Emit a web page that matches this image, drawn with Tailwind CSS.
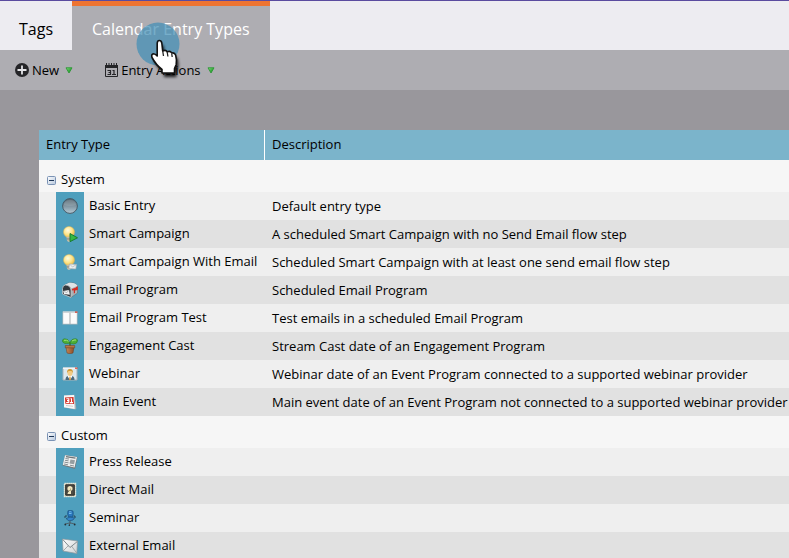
<!DOCTYPE html>
<html lang="en">
<head>
<meta charset="utf-8">
<meta name="viewport" content="width=device-width, initial-scale=1">
<title>Calendar Entry Types</title>
<script src="https://cdn.jsdelivr.net/npm/@tailwindcss/browser@4"></script>
</head>
<body class="relative min-h-screen overflow-hidden bg-[#99979c] font-['Open_Sans','Noto_Sans',sans-serif] text-[13px] leading-5 text-black">
<svg class="absolute h-0 w-0" aria-hidden="true">
  <defs>
    <linearGradient id="tri" x1="0" y1="0" x2="1" y2="1"><stop offset="0" stop-color="#8be082"/><stop offset=".6" stop-color="#2fa836"/><stop offset="1" stop-color="#16841f"/></linearGradient>
    <linearGradient id="ball" x1="0" y1="0" x2="0" y2="1"><stop offset="0" stop-color="#54656f"/><stop offset=".45" stop-color="#7b8f9b"/><stop offset="1" stop-color="#b4cad6"/></linearGradient>
    <radialGradient id="glass" cx=".4" cy=".35" r=".7"><stop offset="0" stop-color="#fffbe0"/><stop offset=".55" stop-color="#ffe58a"/><stop offset="1" stop-color="#e8b640"/></radialGradient>
    <linearGradient id="toggle" x1="0" y1="0" x2="1" y2="1"><stop offset="0" stop-color="#fff"/><stop offset="1" stop-color="#b5c6dc"/></linearGradient>
    <linearGradient id="paper" x1="0" y1="0" x2="1" y2="1"><stop offset="0" stop-color="#fff"/><stop offset="1" stop-color="#cfd2d3"/></linearGradient>
    <linearGradient id="pot" x1="0" y1="0" x2="1" y2="0"><stop offset="0" stop-color="#c98a58"/><stop offset="1" stop-color="#8a4b26"/></linearGradient>
    <g id="bulb"><circle cx="7" cy="6" r="5.500" fill="url(#glass)" stroke="#dfb85a" stroke-width=".5"/><path d="M4.500 10.800h5v1l-.5 3-1.200 1H6.200L5 14.800z" fill="#cfc8b4"/><path d="M4.700 12.300h4.600M5 13.800h4" stroke="#837d70" stroke-width=".7"/></g>
    <g id="minus"><rect x=".5" y=".5" width="8" height="8" rx="1" fill="url(#toggle)" stroke="#7b93b5"/><path d="M2 4.500h5" stroke="#1d3557"/></g>
  </defs>
</svg>

<header>
  <nav aria-label="Sections" class="flex h-[50px] border-t border-[#5a4b9f] bg-[#edecf1] text-base">
    <a href="#tags" class="flex w-[72px] items-center pt-1.5 pl-[19px]">Tags</a>
    <a href="#types" aria-current="page" class="flex items-center border-t-[5px] border-[#ee7431] bg-[#aeadb2] px-5 pt-px whitespace-nowrap text-white">Calendar Entry Types</a>
  </nav>
  <div role="toolbar" aria-label="Entry types" class="flex h-10 items-center gap-8 bg-[#aeadb2] pl-[15px]">
    <button type="button" class="flex items-center gap-[3px]">
      <svg class="size-[14px]" viewBox="0 0 14 14" aria-hidden="true"><circle cx="7" cy="7" r="7" fill="#252528"/><path d="M7 2.500v9M2.500 7h9" stroke="#e5e5e8" stroke-width="1.800"/></svg>
      <span>New</span>
      <svg class="ml-[3px] h-[7px] w-2" viewBox="0 0 8 7" aria-hidden="true"><path d="M1 .8h6L4 6z" fill="url(#tri)" stroke="#2b9634" stroke-width=".9" stroke-linejoin="round"/></svg>
    </button>
    <button type="button" class="flex items-center gap-[3px]">
      <svg class="h-[15px] w-[13px]" viewBox="0 0 13 15" aria-hidden="true"><path d="M0 2h13v3H0z" fill="#252528"/><path d="M1.500 0v3M4 0v3M6.500 0v3M9 0v3M11.500 0v3" stroke="#252528"/><path d="M.5 5v8.500h12V5" fill="none" stroke="#252528"/><path d="M2.500 7.500h3v4h-3M3.500 9.500h2M7.500 7.500H9v4M7 11.500h4" fill="none" stroke="#252528" stroke-width="1.200"/></svg>
      <span>Entry Actions</span>
      <svg class="ml-[3px] h-[7px] w-2" viewBox="0 0 8 7" aria-hidden="true"><path d="M1 .8h6L4 6z" fill="url(#tri)" stroke="#2b9634" stroke-width=".9" stroke-linejoin="round"/></svg>
    </button>
  </div>
</header>

<main class="pt-10 pl-[39px]">
  <table class="w-full table-fixed border-collapse text-left whitespace-nowrap">
    <colgroup><col class="w-[226px]"><col></colgroup>
    <thead class="bg-[#7bb4cb]">
      <tr class="h-[30px]">
        <th scope="col" class="p-0 font-normal"><div class="flex h-[30px] items-center border-r border-white pb-0.5 pl-[7px]">Entry Type</div></th>
        <th scope="col" class="p-0 pb-0.5 pl-[7px] font-normal">Description</th>
      </tr>
    </thead>
    <tbody>
      <tr class="h-8 bg-[#f6f6f6]"><th scope="rowgroup" colspan="2" class="p-0 pt-2 pl-2 font-normal"><button type="button" class="flex items-center gap-[5px]"><svg class="size-[9px]" viewBox="0 0 9 9" aria-hidden="true"><use href="#minus"/></svg><span class="pb-0.5">System</span></button></th></tr>
      <tr class="h-7 bg-[#efefef]"><td class="p-0"><div class="ml-[17px] flex items-center gap-[5px]"><span class="grid size-7 place-items-center bg-[#4f9fbd]"><svg class="size-4" viewBox="0 0 16 16" aria-hidden="true"><circle cx="8" cy="8" r="7.400" fill="url(#ball)" stroke="#465b68"/><path d="M2 7a6 5 0 0 1 12 0q-6 2-12 0z" fill="#fff" opacity=".12"/></svg></span><span class="pb-0.5">Basic Entry</span></div></td><td class="p-0 pl-[7px]">Default entry type</td></tr>
      <tr class="h-7 bg-[#e1e1e1]"><td class="p-0"><div class="ml-[17px] flex items-center gap-[5px]"><span class="grid size-7 place-items-center bg-[#4f9fbd]"><svg class="size-4" viewBox="0 0 16 16" aria-hidden="true"><use href="#bulb"/><path d="M8 7.500l7.500 4.300L8 15.700z" fill="#35b944" stroke="#14762a" stroke-width=".9"/></svg></span><span class="pb-0.5">Smart Campaign</span></div></td><td class="p-0 pl-[7px]">A scheduled Smart Campaign with no Send Email flow step</td></tr>
      <tr class="h-7 bg-[#efefef]"><td class="p-0"><div class="ml-[17px] flex items-center gap-[5px]"><span class="grid size-7 place-items-center bg-[#4f9fbd]"><svg class="size-4" viewBox="0 0 16 16" aria-hidden="true"><use href="#bulb"/><path d="M7.500 10l7 .5-.7 4.500-7-.4z" fill="#eceeee" stroke="#a5adb0" stroke-width=".6"/><path d="M7.500 10l3 3 4-2.500" fill="none" stroke="#a5adb0" stroke-width=".6"/></svg></span><span class="pb-0.5">Smart Campaign With Email</span></div></td><td class="p-0 pl-[7px]">Scheduled Smart Campaign with at least one send email flow step</td></tr>
      <tr class="h-7 bg-[#e1e1e1]"><td class="p-0"><div class="ml-[17px] flex items-center gap-[5px]"><span class="grid size-7 place-items-center bg-[#4f9fbd]"><svg class="size-4" viewBox="0 0 16 16" aria-hidden="true"><path d="M2.500 3L7 .8q6-.8 8.500 3V11L9 15.500z" fill="#a9b1b6" stroke="#5b646a" stroke-width=".5"/><path d="M2.500 3L7 .8q6-.8 8.500 3L9.500 6.500Q7 2.500 2.500 3z" fill="#dfe3e5"/><path d="M.5 6.500Q.7 3 3.700 3 8.500 3.500 9 8v7.500L.5 12z" fill="#33393e" stroke="#c6ccce" stroke-width=".8"/><path d="M1.200 9l5.800-1 .8 4.800L2 12z" fill="#f2f3f3"/><path d="M1.500 9.300l3.200 1.400L7 8.200" fill="none" stroke="#8b9499" stroke-width=".6"/><path d="M10 7l4-1.600V5l1.800-.5V8l-2.800.5V11l-1.200.5V8.200L10 8.500z" fill="#d72a20"/></svg></span><span class="pb-0.5">Email Program</span></div></td><td class="p-0 pl-[7px]">Scheduled Email Program</td></tr>
      <tr class="h-7 bg-[#efefef]"><td class="p-0"><div class="ml-[17px] flex items-center gap-[5px]"><span class="grid size-7 place-items-center bg-[#4f9fbd]"><svg class="size-4" viewBox="0 0 16 16" aria-hidden="true"><path d="M.5 1.500h15v13H.5z" fill="#b2b6b8"/><path d="M1.200 2.700h6.200v11H1.200zM8.600 2.700h6.200v11H8.600z" fill="#fbfbfb"/><path d="M1 1.500h12v1H1z" fill="#dfe3e5"/><path d="M13 1.500h2.500v1.300H13z" fill="#dd4736"/></svg></span><span class="pb-0.5">Email Program Test</span></div></td><td class="p-0 pl-[7px]">Test emails in a scheduled Email Program</td></tr>
      <tr class="h-7 bg-[#e1e1e1]"><td class="p-0"><div class="ml-[17px] flex items-center gap-[5px]"><span class="grid size-7 place-items-center bg-[#4f9fbd]"><svg class="size-4" viewBox="0 0 16 16" aria-hidden="true"><path d="M8 8.500V4" stroke="#327728" stroke-width="1.500"/><path d="M8 5Q6 0 2 .8L.2 2.300Q1 6 4.500 5.500 7 5.500 8 5z" fill="#4cae35" stroke="#25751f" stroke-width=".5"/><path d="M8 5q1-4.500 6-4.200L15.800 2q-.6 4-4 4Q9 6 8 5z" fill="#4cae35" stroke="#25751f" stroke-width=".5"/><path d="M2 2.300q3-.6 4.500 1M10 3q2-1.400 4-1" stroke="#a1e27a" fill="none"/><path d="M4 9h8l-1 6q-3 1.500-6 0z" fill="url(#pot)" stroke="#6b3b21" stroke-width=".5"/><path d="M3.300 7.500h9.400v2.300H3.300z" fill="#b97345" stroke="#6b3b21" stroke-width=".5"/></svg></span><span class="pb-0.5">Engagement Cast</span></div></td><td class="p-0 pl-[7px]">Stream Cast date of an Engagement Program</td></tr>
      <tr class="h-7 bg-[#efefef]"><td class="p-0"><div class="ml-[17px] flex items-center gap-[5px]"><span class="grid size-7 place-items-center bg-[#4f9fbd]"><svg class="size-4" viewBox="0 0 16 16" aria-hidden="true"><path d="M1 2h14v12H1z" fill="#dce8ef" stroke="#a9b1b6"/><path d="M1 1.500h14v1.300H1z" fill="#fff"/><path d="M13 1.500h2.500v1.300H13z" fill="#dd4736"/><path d="M3.500 14q0-4 3-4.300h3q3 .3 3 4.300z" fill="#4b6b81"/><path d="M6.500 9h3l.8 1.500L8 14l-2.300-3.500z" fill="#fff"/><path d="M7.600 10.500h.8l.5 3.500H7z" fill="#d5902e"/><ellipse cx="8" cy="6.800" rx="2.600" ry="3.300" fill="#f3cb85"/><path d="M5.200 7q-.5-4 2.800-4t2.800 4L9.500 5h-3z" fill="#d09a35"/></svg></span><span class="pb-0.5">Webinar</span></div></td><td class="p-0 pl-[7px]">Webinar date of an Event Program connected to a supported webinar provider</td></tr>
      <tr class="h-7 bg-[#e1e1e1]"><td class="p-0"><div class="ml-[17px] flex items-center gap-[5px]"><span class="grid size-7 place-items-center bg-[#4f9fbd]"><svg class="size-4" viewBox="0 0 16 16" aria-hidden="true"><path d="M2 1.500L12.500.8l1.800 13.700-1 1L2 13.500z" fill="#a9b3b8"/><path d="M2 1.500l10-.6.700 14L2 13.300z" fill="#f8f8f8"/><path d="M3 3.500l8.500-.5.5 7-8.700-.3z" fill="#d53227"/><path d="M4.300 4.700h2.500v3.800H4.200M5 6.600h1.800M8.500 4.700h1v4M8 8.600h3" fill="none" stroke="#fff" stroke-width="1.100"/><path d="M4 11.500l7 .8" stroke="#cbd0d2"/></svg></span><span class="pb-0.5">Main Event</span></div></td><td class="p-0 pl-[7px]">Main event date of an Event Program not connected to a supported webinar provider</td></tr>
    </tbody>
    <tbody>
      <tr class="h-8 bg-[#f6f6f6]"><th scope="rowgroup" colspan="2" class="p-0 pt-2 pl-2 font-normal"><button type="button" class="flex items-center gap-[5px]"><svg class="size-[9px]" viewBox="0 0 9 9" aria-hidden="true"><use href="#minus"/></svg><span class="pb-0.5">Custom</span></button></th></tr>
      <tr class="h-7 bg-[#efefef]"><td class="p-0"><div class="ml-[17px] flex items-center gap-[5px]"><span class="grid size-7 place-items-center bg-[#4f9fbd]"><svg class="size-4" viewBox="0 0 16 16" aria-hidden="true"><path d="M3 1l12.500 2L13 15 .5 11.500z" fill="#74797c"/><path d="M3 1.300L15 3l-2.500 10.500L.8 10.800z" fill="#edefef"/><path d="M4 2.700l9.500 1.500" stroke="#6d7376" stroke-width="1.300"/><path d="M3.500 4.500l3.500.5M3 6.300l3.500.5M2.500 8.200l4 .6M2 10l4 .8M8 11.200l4 .8" stroke="#8b9194"/><path d="M8.500 5.500l4.500.8-1 4-4.500-.8z" fill="#969ea1"/></svg></span><span class="pb-0.5">Press Release</span></div></td><td class="p-0"></td></tr>
      <tr class="h-7 bg-[#e1e1e1]"><td class="p-0"><div class="ml-[17px] flex items-center gap-[5px]"><span class="grid size-7 place-items-center bg-[#4f9fbd]"><svg class="size-4" viewBox="0 0 16 16" aria-hidden="true"><path d="M2.500 1.500h11v13h-11z" fill="#e9ddbb" stroke="#f4eddb" stroke-width="1.500" stroke-dasharray="1.300 .7"/><path d="M3.700 2.800h8.600v10.400H3.700z" fill="#4d4b43" stroke="#282a28"/><path d="M5.500 12q.5-2.500 1.700-2.800Q4.800 8 5.400 5.800 6.500 3.500 9 4.200q2.200 1 1.500 3.300L9 9v3z" fill="#f2e7be"/><path d="M8.500 6.500v2H7" fill="none" stroke="#9a8b5e" stroke-width=".7"/></svg></span><span class="pb-0.5">Direct Mail</span></div></td><td class="p-0"></td></tr>
      <tr class="h-7 bg-[#efefef]"><td class="p-0"><div class="ml-[17px] flex items-center gap-[5px]"><span class="grid size-7 place-items-center bg-[#4f9fbd]"><svg class="size-4" viewBox="0 0 16 16" aria-hidden="true"><path d="M6 .8q3-.9 5 .3.700 3.100-.5 5.900h-4Q5 4 6 .8z" fill="#2a78bd" stroke="#144677" stroke-width=".6"/><path d="M7 2q1.300-.6 2.500 0M7 3.500h2.500" stroke="#72b8e8" fill="none"/><path d="M4 8.500l4-1.400 4.500.8L11 10l-4 1z" fill="#3585c8" stroke="#144677" stroke-width=".6"/><path d="M3 8V6h2M13 8V6h-1.500" fill="none" stroke="#243b4d" stroke-width=".9"/><path d="M8 10.500v3M3.500 14L8 12.800l4.500 1.200M8 13l-.7 2" fill="none" stroke="#4d5a62" stroke-width=".9"/><circle cx="3.300" cy="14.500" r=".9" fill="#263036"/><circle cx="12.700" cy="14.500" r=".9" fill="#263036"/><circle cx="7.300" cy="15.200" r=".8" fill="#263036"/></svg></span><span class="pb-0.5">Seminar</span></div></td><td class="p-0"></td></tr>
      <tr class="h-7 bg-[#e1e1e1]"><td class="p-0"><div class="ml-[17px] flex items-center gap-[5px]"><span class="grid size-7 place-items-center bg-[#4f9fbd]"><svg class="size-4" viewBox="0 0 16 16" aria-hidden="true"><path d="M.5 1l15 2-.7 12.500L1 13z" fill="url(#paper)" stroke="#929a9e" stroke-width=".7"/><path d="M1 13l5.500-5.500M14.800 15.200L9.500 8" stroke="#969c9e" fill="none" stroke-width=".8"/><path d="M.8 1.500L8 9.500 15.300 3.500" fill="none" stroke="#818a8e"/></svg></span><span class="pb-0.5">External Email</span></div></td><td class="p-0"></td></tr>
    </tbody>
  </table>
</main>

<svg class="pointer-events-none absolute top-[20px] left-[134px] h-[64px] w-[54px]" viewBox="134 20 54 64" aria-hidden="true">
  <defs>
    <filter id="soft" x="-30%" y="-30%" width="170%" height="170%"><feGaussianBlur stdDeviation="1.800"/></filter>
    <path id="hand" d="M157.200 53V43.500q0-3 2.100-3t2.500 2.500l.9 8q3.200-1.500 4.500.8 3.200-1.300 4.500 1.200 3-.8 4 2.200 1.300 5 .5 9.300l-1.700 4V73h-12.500v-3.500q-6-4.500-10-12-1-3.300 1.500-3.800 1.900 0 3.700 2.300z"/>
  </defs>
  <circle cx="158" cy="44" r="21.500" fill="#438fb5" opacity=".72"/>
  <use href="#hand" fill="#000" opacity=".85" filter="url(#soft)" transform="translate(2 4)"/>
  <use href="#hand" fill="#fff" stroke="#111" stroke-width="1.600" stroke-linejoin="round"/>
  <path d="M162.700 51l.8 5M167.200 52l.7 4.500M171.700 53.500l.5 3.500" stroke="#222" stroke-width="1.300" fill="none"/>
</svg>
</body>
</html>
